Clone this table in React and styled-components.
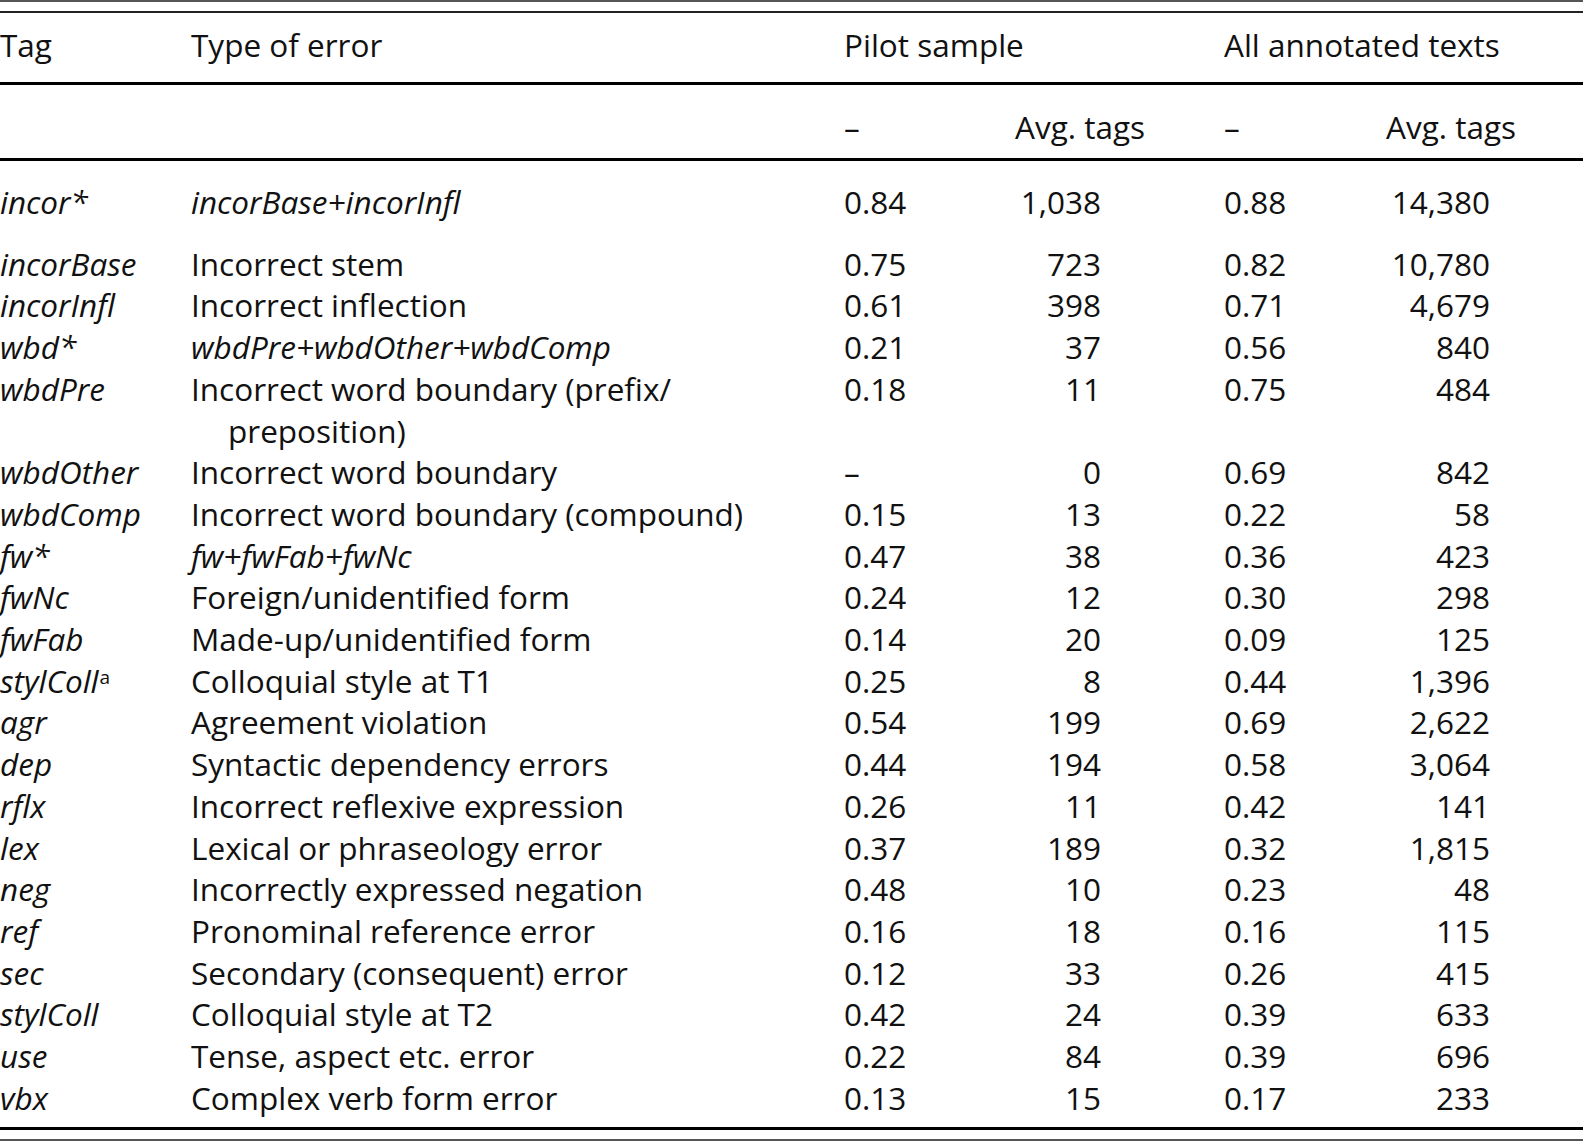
import React from "react";
import styled, { createGlobalStyle } from "styled-components";

const GlobalStyle = createGlobalStyle`
  html, body {
    margin: 0;
    padding: 0;
    background: #ffffff;
  }
`;

const COLS = "191px 653px 171px 209px 162px 1fr";

const StyledTable = styled.div`
  width: 1583px;
  font-family: "Open Sans", "Noto Sans", sans-serif;
  font-size: 31.5px;
  color: #111111;
  line-height: 41.7px;
`;

const Rule = styled.div`
  height: ${(p) => p.$h}px;
  background: ${(p) => p.$color || "#000000"};
  margin-top: ${(p) => p.$gap || 0}px;
`;

const Row = styled.div`
  display: grid;
  grid-template-columns: ${COLS};
  align-items: start;
  height: ${(p) => (p.$height ? `${p.$height}px` : "auto")};
  padding-top: ${(p) => p.$top || 0}px;
  box-sizing: border-box;
`;

const Body = styled.div`
  padding: 20px 0 8.6px;
  .first {
    margin-bottom: 20px;
  }
`;

const Cell = styled.div`
  font-style: ${(p) => (p.$italic ? "italic" : "normal")};
  white-space: nowrap;
`;

const Hanging = styled(Cell)`
  padding-left: 37px;
  text-indent: -37px;
`;

const Num = styled.div`
  width: ${(p) => p.$w}px;
  text-align: right;
`;

const Sup = styled.span`
  font-style: normal;
  font-size: 19px;
  vertical-align: 9px;
  line-height: 0;
  margin-left: 1px;
`;

const rows = [
  ["incorBase", "Incorrect stem", "0.75", "723", "0.82", "10,780"],
  ["incorInfl", "Incorrect inflection", "0.61", "398", "0.71", "4,679"],
  ["wbd*", "wbdPre+wbdOther+wbdComp", "0.21", "37", "0.56", "840", true],
  ["wbdPre", "wbdPre", "0.18", "11", "0.75", "484"],
  ["wbdOther", "Incorrect word boundary", "–", "0", "0.69", "842"],
  ["wbdComp", "Incorrect word boundary (compound)", "0.15", "13", "0.22", "58"],
  ["fw*", "fw+fwFab+fwNc", "0.47", "38", "0.36", "423", true],
  ["fwNc", "Foreign/unidentified form", "0.24", "12", "0.30", "298"],
  ["fwFab", "Made-up/unidentified form", "0.14", "20", "0.09", "125"],
  ["stylColl1", "Colloquial style at T1", "0.25", "8", "0.44", "1,396"],
  ["agr", "Agreement violation", "0.54", "199", "0.69", "2,622"],
  ["dep", "Syntactic dependency errors", "0.44", "194", "0.58", "3,064"],
  ["rflx", "Incorrect reflexive expression", "0.26", "11", "0.42", "141"],
  ["lex", "Lexical or phraseology error", "0.37", "189", "0.32", "1,815"],
  ["neg", "Incorrectly expressed negation", "0.48", "10", "0.23", "48"],
  ["ref", "Pronominal reference error", "0.16", "18", "0.16", "115"],
  ["sec", "Secondary (consequent) error", "0.12", "33", "0.26", "415"],
  ["stylColl", "Colloquial style at T2", "0.42", "24", "0.39", "633"],
  ["use", "Tense, aspect etc. error", "0.22", "84", "0.39", "696"],
  ["vbx", "Complex verb form error", "0.13", "15", "0.17", "233"],
];

const TagCell = ({ tag }) => {
  if (tag === "stylColl1") {
    return (
      <Cell $italic>
        stylColl<Sup>a</Sup>
      </Cell>
    );
  }
  return <Cell $italic>{tag}</Cell>;
};

const TypeCell = ({ tag, type, italic }) => {
  if (tag === "wbdPre") {
    return (
      <Hanging>
        Incorrect word boundary (prefix/
        <br />
        preposition)
      </Hanging>
    );
  }
  return <Cell $italic={italic}>{type}</Cell>;
};

const DataRow = ({ row, className }) => {
  const [tag, type, p1, p2, a1, a2, italic] = row;
  return (
    <Row className={className}>
      <TagCell tag={tag} />
      <TypeCell tag={tag} type={type} italic={italic} />
      <Cell>{p1}</Cell>
      <Num $w={86}>{p2}</Num>
      <Cell>{a1}</Cell>
      <Num $w={104}>{a2}</Num>
    </Row>
  );
};

export default function App() {
  return (
    <>
      <GlobalStyle />
      <StyledTable>
        <Rule $h={2} $color="#555555" />
        <Rule $h={2} $color="#222222" $gap={9} />
        <Row $height={69} $top={11}>
          <Cell>Tag</Cell>
          <Cell>Type of error</Cell>
          <Cell>Pilot sample</Cell>
          <Cell />
          <Cell>All annotated texts</Cell>
          <Cell />
        </Row>
        <Rule $h={3} />
        <Row $height={73} $top={21}>
          <Cell />
          <Cell />
          <Cell>–</Cell>
          <Cell>Avg. tags</Cell>
          <Cell>–</Cell>
          <Cell>Avg. tags</Cell>
        </Row>
        <Rule $h={3} />
        <Body>
          <DataRow
            className="first"
            row={["incor*", "incorBase+incorInfl", "0.84", "1,038", "0.88", "14,380", true]}
          />
          {rows.map((r) => (
            <DataRow key={r[0]} row={r} />
          ))}
        </Body>
        <Rule $h={3} />
        <Rule $h={2} $color="#555555" $gap={9} />
      </StyledTable>
    </>
  );
}
